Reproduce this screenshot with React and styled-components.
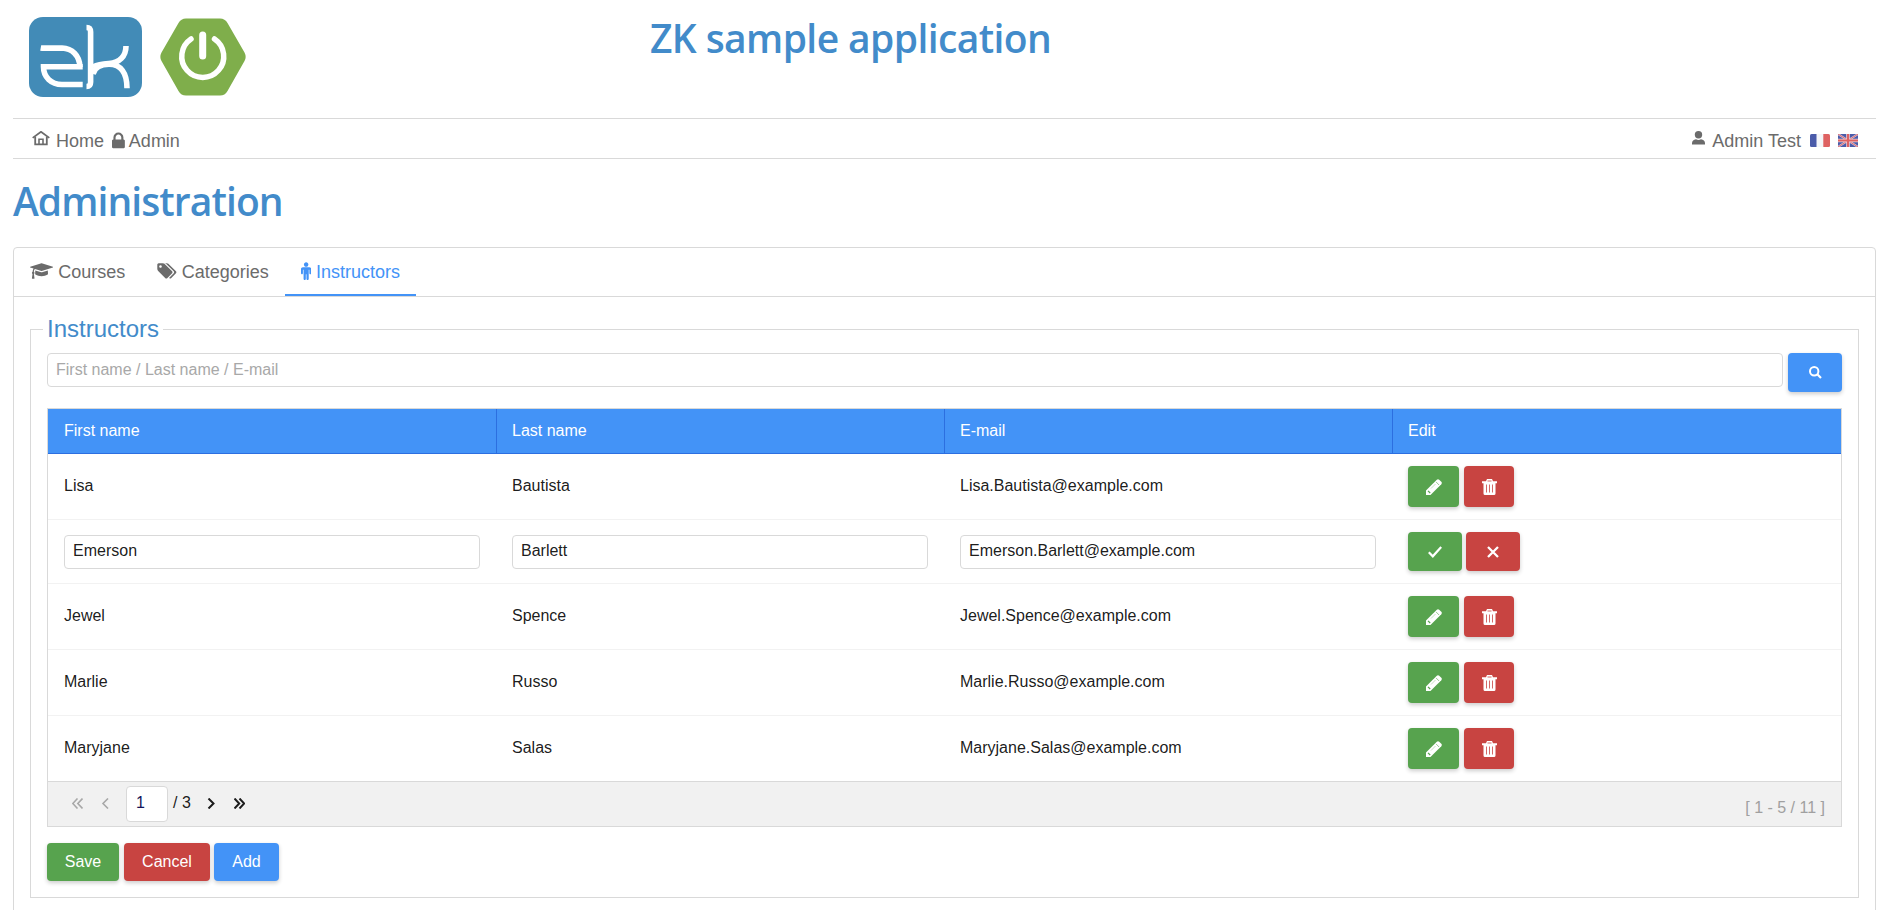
import React from "react";
import styled, { createGlobalStyle } from "styled-components";

const Global = createGlobalStyle`
  * { box-sizing: border-box; }
  html, body { margin: 0; height: 910px; overflow: hidden; background: #fff; }
  body { font-family: "Liberation Sans", Arial, sans-serif; font-size: 16px; color: rgba(0,0,0,.9); }
`;

const Page = styled.div`
  height: 910px;
  padding: 0 13px;
  overflow: hidden;
`;
const Header = styled.header`
  display: grid;
  grid-template-columns: 637px 1fr;
  height: 118px;
`;
const Logos = styled.div`
  display: flex;
  gap: 18px;
  padding: 17px 0 0 16px;
  svg { display: block; }
`;
const Heading = styled.h1`
  margin: 0;
  font-family: "Open Sans", "Noto Sans", sans-serif;
  font-weight: 600;
  font-size: 39px;
  line-height: 54px;
  letter-spacing: ${(p) => p.$tracking};
  color: #428bca;
  white-space: nowrap;
`;
const AppTitle = styled(Heading)`
  padding-top: 11px;
`;
const PageTitle = styled(Heading)`
  padding-top: 15px;
  height: 88px;
`;
const Nav = styled.nav`
  display: flex;
  align-items: flex-start;
  height: 41px;
  padding: 12px 18px 0 19px;
  border-top: 1px solid #d9d9d9;
  border-bottom: 1px solid #d9d9d9;
  font-size: 18px;
  line-height: 21px;
  color: #6b6b6b;
`;
const NavItem = styled.span`
  display: flex;
  gap: ${(p) => p.$gap}px;
  margin-right: ${(p) => p.$after}px;
  svg { display: block; }
`;
const Spacer = styled.div`
  flex: 1;
`;
const Flag = styled.svg`
  display: block;
  width: 20px;
  height: 13px;
  margin: 3px 0 0 8px;
`;

const Tabbox = styled.section`
  height: 700px;
  border: 1px solid #d9d9d9;
  border-radius: 4px;
`;
const Tabs = styled.div`
  display: flex;
  height: 49px;
  border-bottom: 1px solid #d9d9d9;
`;
const Tab = styled.div`
  display: flex;
  gap: ${(p) => p.$gap}px;
  height: 48px;
  padding: 14px ${(p) => p.$end || 16}px 0 16px;
  font-size: 18px;
  line-height: 21px;
  color: ${(p) => (p.$active ? "#4393f7" : "#6b6b6b")};
  border-bottom: 2px solid ${(p) => (p.$active ? "#4393f7" : "transparent")};
  svg { display: block; }
`;
const TabPanel = styled.div`
  padding: 18px 16px 0;
`;
const Group = styled.fieldset`
  margin: 0;
  height: 583px;
  padding: 10px 16px 0;
  border: 1px solid #d9d9d9;
  min-width: 0;
`;
const Legend = styled.legend`
  margin-left: -4px;
  padding: 0 4px;
  height: 28px;
  font-size: 24px;
  line-height: 28px;
  color: #428bca;
`;
const SearchBar = styled.div`
  display: flex;
  align-items: flex-start;
  gap: 5px;
  height: 55px;
`;
const TextInput = styled.input`
  flex: 1;
  width: 100%;
  min-width: 0;
  height: 34px;
  padding: 0 8px ${(p) => p.$lift || 0}px;
  border: 1px solid #d9d9d9;
  border-radius: 4px;
  background: #fff;
  font: 16px "Liberation Sans", Arial, sans-serif;
  color: rgba(0,0,0,.9);
  outline: none;
  &::placeholder { color: #a8a8a8; opacity: 1; }
`;
const tones = { green: "#57a34e", red: "#c84441", blue: "#4393f7" };
const Button = styled.button`
  display: flex;
  align-items: center;
  justify-content: center;
  width: ${(p) => p.$w}px;
  height: ${(p) => p.$h}px;
  padding: 0;
  border: 0;
  border-radius: 4px;
  background: ${(p) => tones[p.$tone]};
  box-shadow: 0 2px 4px rgba(0,0,0,.2);
  font: 16px "Liberation Sans", Arial, sans-serif;
  color: #fff;
  svg { display: block; }
`;

const Grid = styled.div`
  border: 1px solid #d9d9d9;
`;
const Row = styled.div`
  display: grid;
  grid-template-columns: 448px 448px 448px 1fr;
  align-items: center;
  height: ${(p) => p.$h}px;
  border-bottom: 1px solid #f2f2f2;
  &:last-of-type { border-bottom: 0; }
`;
const HeadRow = styled(Row)`
  align-items: stretch;
  height: 45px;
  background: #4393f7;
  border-bottom: 1px solid #2c6fe0;
  color: #fff;
`;
const HeadCell = styled.div`
  padding: 0 16px 0 15px;
  line-height: 43px;
  border-left: 1px solid #2c6fe0;
  &:first-child { border-left-color: transparent; }
`;
const Cell = styled.div`
  display: flex;
  gap: ${(p) => p.$gap || 0}px;
  padding: 0 16px;
  line-height: 20px;
`;
const TextCell = styled(Cell)`
  padding-bottom: 2px;
`;
const Body = styled.div``;
const Paging = styled.div`
  display: flex;
  align-items: flex-start;
  height: 45px;
  padding: 4px 16px 0 24px;
  border-top: 1px solid #d9d9d9;
  background: #f1f1f1;
`;
const PageArrow = styled.svg`
  display: block;
  width: 11px;
  height: 11px;
  margin: 12px ${(p) => p.$after}px 0 0;
  fill: none;
  stroke: ${(p) => (p.$off ? "#a8a8a8" : "#1c1c1c")};
  stroke-width: ${(p) => (p.$off ? 1.6 : 2)};
`;
const PageInput = styled(TextInput)`
  flex: none;
  width: 42px;
  height: 36px;
  padding: 0 9px 2px;
  color: #14145a;
`;
const PageCount = styled.span`
  width: 37px;
  padding-left: 5px;
  line-height: 34px;
`;
const PageInfo = styled.span`
  margin-left: auto;
  line-height: 43px;
  color: #a0a0a0;
`;
const Actions = styled.div`
  display: flex;
  gap: ${(p) => p.$gap}px;
  padding-top: 16px;
  button + button + button { margin-left: -1px; }
`;

const ZkLogo = () => (
  <svg width="113" height="80" viewBox="0 0 113 80">
    <rect width="113" height="80" rx="14" fill="#428bb7" />
    <g fill="none" stroke="#fff" strokeWidth="5.6">
      <path d="M11.700 31 C14 31.400 20 31 33 31 C43 31.500 50.500 38 51 50" />
      <path d="M53.700 49.800 H14.500 C14.500 60 22 67.500 33 67.500 H53.700" />
      <path d="M57.500 10.500 C60.500 10.500 61.600 12 61.600 15 V65 C61.600 68 60.500 69.500 57.500 69.500" />
      <path d="M64 57 C66 49 73 47.300 80 47.300 C92 47.300 98 56 98 71.300" />
      <path d="M64 50 C70 47 75 46.800 80 46.500 C90 45.500 97 40 97 29" />
    </g>
  </svg>
);
const PowerLogo = () => (
  <svg width="86" height="80" viewBox="0 0 86 80">
    <path d="M26 1.500 H60 Q65 1.500 67.500 6 L84.500 35.500 Q86.800 40 84.500 44 L67.500 74 Q65 78.500 60 78.500 H26 Q21 78.500 18.500 74 L1.500 44 Q-.8 40 1.500 35.500 L18.500 6 Q21 1.500 26 1.500Z" fill="#7fae4b" />
    <path d="M31 22 A21 21 0 1 0 54.500 22" fill="none" stroke="#fff" strokeWidth="5.500" strokeLinecap="round" />
    <path d="M42.700 18 V39" stroke="#fff" strokeWidth="7" strokeLinecap="round" />
  </svg>
);

const FaIcon = ({ d, w = 1792, size = 18, vx = 0 }) => (
  <svg width={(w / 1792) * size} height={size} viewBox={`${vx} 0 ${w} 1792`} fill="currentColor">
    <path d={d} />
  </svg>
);
const LOCK = "M640 768h512v-192q0-106-75-181t-181-75-181 75-75 181v192zm832 96v576q0 40-28 68t-68 28h-960q-40 0-68-28t-28-68v-576q0-40 28-68t68-28h32v-192q0-184 132-316t316-132 316 132 132 316v192h32q40 0 68 28t28 68z";
const CAP = "M1774 836l18 316q4 69-82 128t-235 93.5-323 34.5-323-34.5-235-93.5-82-128l18-316 574 181q22 7 48 7t48-7zm530-324q0 23-22 31l-1120 352q-4 1-10 1t-10-1l-652-206q-43 34-71 111.5t-34 178.5q63 36 63 109 0 69-58 107l58 433q2 14-8 25-9 11-24 11h-192q-15 0-24-11-10-11-8-25l58-433q-58-38-58-107 0-73 65-111 11-207 98-330l-333-104q-22-8-22-31t22-31l1120-352q4-1 10-1t10 1l1120 352q22 8 22 31z";
const TAGS = "M576 448q0-53-37.5-90.5t-90.5-37.5-90.5 37.5-37.5 90.5 37.5 90.5 90.5 37.5 90.5-37.5 37.5-90.5zm1067 576q0 53-37 90l-491 492q-39 37-91 37-53 0-90-37l-715-716q-38-37-64.5-101t-26.5-117v-416q0-52 38-90t90-38h416q53 0 117 26.5t102 64.5l715 714q37 39 37 91zm384 0q0 53-37 90l-491 492q-39 37-91 37-36 0-59-14t-53-45l470-470q37-37 37-90 0-52-37-91l-715-714q-38-38-102-64.5t-117-26.5h224q53 0 117 26.5t102 64.5l715 714q37 39 37 91z";
const MALE = "M1408 704v416q0 40-28 68t-68 28-68-28-28-68v-352h-64v912q0 46-33 79t-79 33-79-33-33-79v-464h-64v464q0 46-33 79t-79 33-79-33-33-79v-912h-64v352q0 40-28 68t-68 28-68-28-28-68v-416q0-80 56-136t136-56h640q80 0 136 56t56 136zm-288-448q0 93-65.5 158.5t-158.5 65.5-158.5-65.5-65.5-158.5 65.5-158.5 158.5-65.5 158.5 65.5 65.5 158.5z";

const HomeIcon = () => (
  <svg width="18" height="15" viewBox="0 0 18 16" preserveAspectRatio="none" fill="none" stroke="currentColor">
    <path d="M.7 7.300 L9 .8 L17.300 7.300" strokeWidth="1.800" />
    <path d="M3.200 6 V14.300 H14.800 V6" strokeWidth="1.800" />
    <path d="M7 14 V8.700 H11 V14" strokeWidth="1.600" />
  </svg>
);
const UserIcon = () => (
  <svg width="13" height="14" viewBox="0 0 13 14" fill="currentColor">
    <circle cx="6.500" cy="3.700" r="3.700" />
    <path d="M0 13.500 V12 Q.3 8.800 4 8.200 Q6.500 9.600 9 8.200 Q12.700 8.800 13 12 V13.500Z" />
  </svg>
);
const FlagFr = () => (
  <Flag viewBox="0 0 20 13">
    <rect width="20" height="13" rx="1.500" fill="#f4f5f8" />
    <path d="M1.500 0 H6.500 V13 H1.500 Q0 13 0 11.500 V1.500 Q0 0 1.500 0Z" fill="#4a5ba9" />
    <path d="M13.300 0 H18.500 Q20 0 20 1.500 V11.500 Q20 13 18.500 13 H13.300Z" fill="#de6262" />
  </Flag>
);
const FlagGb = () => (
  <Flag viewBox="0 0 20 13">
    <rect width="20" height="13" rx="1" fill="#4a5ba9" />
    <path d="M0 0 L20 13 M20 0 L0 13" stroke="#d9c3d6" strokeWidth="2" />
    <path d="M0 0 L20 13 M20 0 L0 13" stroke="#de6262" strokeWidth=".9" />
    <path d="M10 0 V13 M0 6.500 H20" stroke="#ecd5de" strokeWidth="3.600" />
    <path d="M10 0 V13 M0 6.500 H20" stroke="#de6262" strokeWidth="2.200" />
  </Flag>
);
const SearchIcon = () => (
  <svg width="13" height="13" viewBox="0 0 13 13" fill="none" stroke="#fff">
    <circle cx="5.200" cy="5.200" r="4.200" strokeWidth="2" />
    <path d="M8.300 8.300 L12 12" strokeWidth="2.200" />
  </svg>
);
const PencilIcon = () => (
  <svg width="16" height="16" viewBox="0 0 16 16">
    <path d="M0 16 V11.500 L10.800 .7 Q12 -.3 13.200 .7 L15.300 2.800 Q16.300 4 15.300 5.200 L4.500 16Z" fill="#fff" />
    <path d="M10 2.900 L13.100 6" stroke="#57a34e" strokeWidth=".6" />
    <path d="M5 9.500 L9.500 5" stroke="#57a34e" strokeWidth=".35" />
    <path d="M2 11.800 L4.200 14" stroke="#57a34e" strokeWidth="1.200" />
  </svg>
);
const TrashIcon = () => (
  <svg width="15" height="16" viewBox="0 0 15 16">
    <path d="M0 2.300 H4 L5 0 H10 L11 2.300 H15 V4.300 H13.500 V14.500 Q13.500 16 12 16 H3 Q1.500 16 1.500 14.500 V4.300 H0Z" fill="#fff" />
    <path d="M5.500 2 H9.500 M4.500 5.500 V13.500 M7.500 5.500 V13.500 M10.500 5.500 V13.500" stroke="#c84441" strokeWidth=".8" />
  </svg>
);
const CheckIcon = () => (
  <svg width="14" height="12" viewBox="0 0 14 12" fill="none" stroke="#fff" strokeWidth="2.200">
    <path d="M.8 6.300 L4.800 10.300 L13.200 1" />
  </svg>
);
const CrossIcon = () => (
  <svg width="12" height="12" viewBox="0 0 12 12" fill="none" stroke="#fff" strokeWidth="2.300">
    <path d="M1 1 L11 11 M11 1 L1 11" />
  </svg>
);

const instructors = [
  ["Lisa", "Bautista", "Lisa.Bautista@example.com"],
  ["Emerson", "Barlett", "Emerson.Barlett@example.com"],
  ["Jewel", "Spence", "Jewel.Spence@example.com"],
  ["Marlie", "Russo", "Marlie.Russo@example.com"],
  ["Maryjane", "Salas", "Maryjane.Salas@example.com"],
];
const columns = ["First name", "Last name", "E-mail", "Edit"];

const ViewRow = ({ values, last }) => (
  <Row $h={last ? 65 : 66}>
    {values.map((v) => <TextCell key={v}>{v}</TextCell>)}
    <Cell $gap={5}>
      <Button $tone="green" $w={51} $h={41}><PencilIcon /></Button>
      <Button $tone="red" $w={50} $h={41}><TrashIcon /></Button>
    </Cell>
  </Row>
);
const EditRow = ({ values }) => (
  <Row $h={64}>
    {values.map((v) => <Cell key={v}><TextInput defaultValue={v} $lift={1} /></Cell>)}
    <Cell $gap={4}>
      <Button $tone="green" $w={54} $h={39}><CheckIcon /></Button>
      <Button $tone="red" $w={54} $h={39}><CrossIcon /></Button>
    </Cell>
  </Row>
);

export default function App() {
  return (
    <Page>
      <Global />
      <Header>
        <Logos><ZkLogo /><PowerLogo /></Logos>
        <AppTitle $tracking="-0.6px">ZK sample application</AppTitle>
      </Header>
      <Nav>
        <NavItem $gap={6} $after={8}><HomeIcon />Home</NavItem>
        <NavItem $gap={4} $after={0}><FaIcon d={LOCK} w={1152} vx={320} size={20} />Admin</NavItem>
        <Spacer />
        <NavItem $gap={7} $after={1}><UserIcon />Admin Test</NavItem>
        <FlagFr />
        <FlagGb />
      </Nav>
      <PageTitle as="h2" $tracking="-0.92px">Administration</PageTitle>
      <Tabbox>
        <Tabs>
          <Tab $gap={5} $end={15}><FaIcon d={CAP} w={2304} size={18} />Courses</Tab>
          <Tab $gap={5}><FaIcon d={TAGS} w={2048} size={18} />Categories</Tab>
          <Tab $gap={5} $active><FaIcon d={MALE} w={1024} vx={384} size={18} />Instructors</Tab>
        </Tabs>
        <TabPanel>
          <Group>
            <Legend>Instructors</Legend>
            <SearchBar>
              <TextInput placeholder="First name / Last name / E-mail" $lift={1} />
              <Button $tone="blue" $w={54} $h={39}><SearchIcon /></Button>
            </SearchBar>
            <Grid>
              <HeadRow>{columns.map((c) => <HeadCell key={c}>{c}</HeadCell>)}</HeadRow>
              <Body>
                {instructors.map((values, i) =>
                  i === 1 ? <EditRow key={i} values={values} /> : <ViewRow key={i} values={values} last={i === 4} />
                )}
              </Body>
              <Paging>
                <PageArrow $off $after={18}><path d="M5.500 .5 L.8 5.500 L5.500 10.500 M10.500 .5 L5.800 5.500 L10.500 10.500" /></PageArrow>
                <PageArrow $off $after={14}><path d="M7 .5 L2 5.500 L7 10.500" /></PageArrow>
                <PageInput defaultValue="1" />
                <PageCount>/ 3</PageCount>
                <PageArrow $after={18}><path d="M3.500 .5 L8.500 5.500 L3.500 10.500" /></PageArrow>
                <PageArrow $after={0}><path d="M.5 .5 L5.200 5.500 L.5 10.500 M5.500 .5 L10.200 5.500 L5.500 10.500" /></PageArrow>
                <PageInfo>[ 1 - 5 / 11 ]</PageInfo>
              </Paging>
            </Grid>
            <Actions $gap={5}>
              <Button $tone="green" $w={72} $h={38}>Save</Button>
              <Button $tone="red" $w={86} $h={38}>Cancel</Button>
              <Button $tone="blue" $w={65} $h={38}>Add</Button>
            </Actions>
          </Group>
        </TabPanel>
      </Tabbox>
    </Page>
  );
}
